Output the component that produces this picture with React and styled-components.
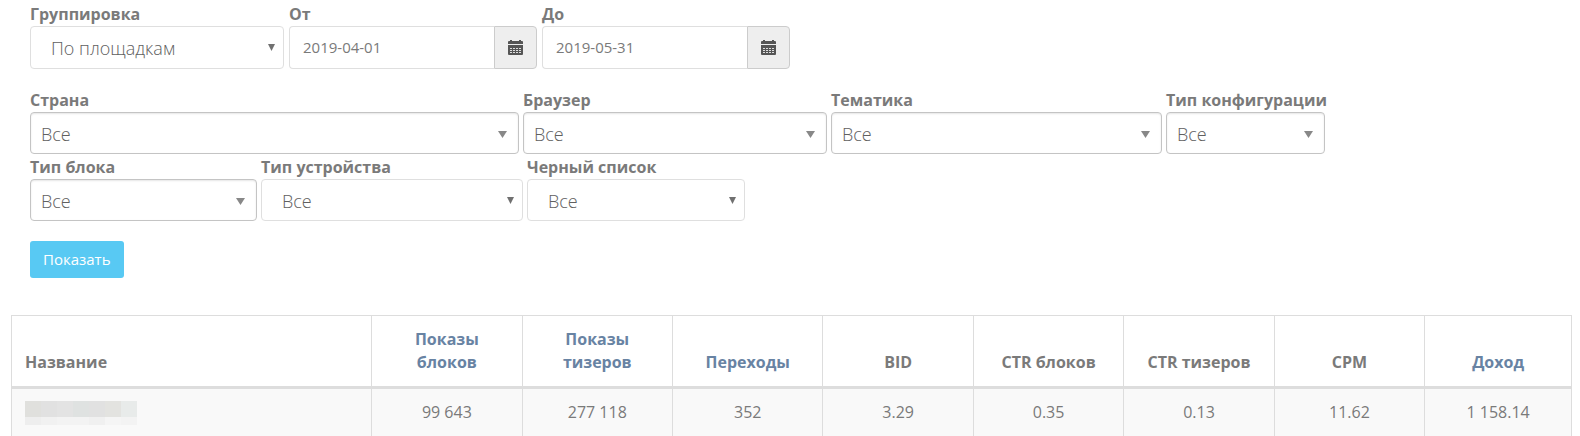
import React, { useState } from 'react';
import styled, { createGlobalStyle } from 'styled-components';

const GlobalStyle = createGlobalStyle`
  * {
    box-sizing: border-box;
  }

  body {
    margin: 0;
    background: #fff;
    color: #7a7a7a;
    font-family: 'Open Sans', 'Noto Sans', sans-serif;
    font-size: 16px;
    line-height: 23px;
  }
`;

const Page = styled.main`
  padding: 3px 8px 0 11px;
`;

const Filters = styled.form`
  padding: 0 19px;
`;

const FilterRow = styled.div`
  display: flex;
  flex-wrap: wrap;
  gap: 2px ${props => props.$wide ? '5px' : '4px'};
  margin-bottom: ${props => props.$last ? '20px' : '2px'};
`;

const Field = styled.div`
  width: ${props => props.$width}px;
`;

const Label = styled.label`
  display: block;
  font-weight: 700;
  white-space: nowrap;
`;

const SelectWrap = styled.div`
  position: relative;
`;

const Select = styled.select`
  appearance: none;
  display: block;
  width: 100%;
  height: ${props => props.$tall ? '43px' : '42px'};
  padding: 0 24px 0 ${props => props.$boxed ? '10px' : '20px'};
  padding-top: ${props => props.$tall ? '0' : '2px'};
  border: 1px solid ${props => props.$boxed ? '#c4c4c4' : '#dfdfdf'};
  border-radius: 4px;
  background: #fff;
  box-shadow: ${props => props.$boxed ? 'inset 0 1px 2px rgba(0, 0, 0, 0.1)' : 'none'};
  color: #606060;
  font-family: inherit;
  font-size: 18px;
  font-weight: 300;
`;

const Arrow = styled.svg`
  position: absolute;
  top: ${props => props.$boxed ? '19px' : '18px'};
  right: ${props => props.$boxed ? '12px' : '9px'};
  width: ${props => props.$boxed ? '9px' : '7px'};
  height: 7px;
  fill: ${props => props.$boxed ? '#888' : '#707070'};
  pointer-events: none;
`;

const DateGroup = styled.div`
  display: flex;
  height: 43px;
`;

const DateInput = styled.input`
  flex: 1;
  min-width: 0;
  padding: 0 13px 2px;
  border: 1px solid #dfdfdf;
  border-right: none;
  border-radius: 4px 0 0 4px;
  color: #7a7a7a;
  font-family: inherit;
  font-size: 15px;
`;

const DateButton = styled.button`
  display: flex;
  align-items: center;
  justify-content: center;
  width: 43px;
  padding: 0;
  border: 1px solid #ccc;
  border-radius: 0 4px 4px 0;
  background: #eee;
  cursor: pointer;
`;

const SubmitButton = styled.button`
  display: block;
  height: 37px;
  padding: 0 13px 2px;
  border: none;
  border-radius: 3px;
  background: #58c9f3;
  color: #fff;
  font-family: inherit;
  font-size: 15px;
  cursor: pointer;

  &:hover {
    background: #39b5e2;
  }
`;

const Table = styled.table`
  width: 100%;
  margin-top: 37px;
  border: 1px solid #ddd;
  border-bottom: none;
  border-spacing: 0;
  table-layout: fixed;
`;

const HeadCell = styled.th`
  width: ${props => props.$width};
  padding: 12px;
  border-right: 1px solid #ddd;
  border-bottom: 3px solid #ddd;
  font-weight: 700;
  text-align: center;
  vertical-align: bottom;

  &:first-child {
    padding-left: 13px;
    text-align: left;
  }

  &:last-child {
    width: auto;
    border-right: none;
  }
`;

const SortLink = styled.a`
  color: #6883a3;
  text-decoration: none;
`;

const Cell = styled.td`
  height: 47px;
  padding: 12px 12px 11px;
  border-right: 1px solid #ddd;
  background: #f9f9f9;
  text-align: center;
  vertical-align: top;

  &:first-child {
    padding-left: 13px;
  }

  &:last-child {
    border-right: none;
  }
`;

const HiddenName = styled.div`
  display: grid;
  grid-template-columns: repeat(7, 16px);
  grid-template-rows: 16px 8px;
`;

const Block = styled.span`
  background: ${props => props.$color};
`;

const groupings = ['По площадкам', 'По дням'];

const mainFilters = [
  { id: 'country', label: 'Страна', width: 489, boxed: true },
  { id: 'browser', label: 'Браузер', width: 304, boxed: true },
  { id: 'topic', label: 'Тематика', width: 331, boxed: true },
  { id: 'config', label: 'Тип конфигурации', width: 159, boxed: true },
];

const extraFilters = [
  { id: 'block', label: 'Тип блока', width: 227, boxed: true },
  { id: 'device', label: 'Тип устройства', width: 262 },
  { id: 'blacklist', label: 'Черный список', width: 218 },
];

const columns = [
  { title: 'Показы блоков', sortable: true },
  { title: 'Показы тизеров', sortable: true },
  { title: 'Переходы', sortable: true },
  { title: 'BID' },
  { title: 'CTR блоков' },
  { title: 'CTR тизеров' },
  { title: 'CPM' },
  { title: 'Доход', sortable: true },
];

const values = ['99 643', '277 118', '352', '3.29', '0.35', '0.13', '11.62', '1 158.14'];

const nameBlocks = [
  '#e0e0dd', '#e1e1e1', '#e3e3e3', '#dfe2e1', '#e1e1e1', '#e3e3e0', '#e8ebea',
  '#eeeeee', '#f1f1f1', '#f3f3f3', '#f3f3f3', '#f0f0f0', '#f5f5f5', '#f3f3f3',
];

const SelectField = ({ id, label, width, boxed, tall, options = ['Все'] }) => (
  <Field $width={width}>
    <Label htmlFor={id}>{label}</Label>
    <SelectWrap>
      <Select id={id} $boxed={boxed} $tall={tall}>
        {options.map(option => (
          <option key={option}>{option}</option>
        ))}
      </Select>
      <Arrow $boxed={boxed} viewBox="0 0 8 8" preserveAspectRatio="none" aria-hidden="true">
        <path d="M0 0h8L4 8z" />
      </Arrow>
    </SelectWrap>
  </Field>
);

const CalendarIcon = () => (
  <svg width="15" height="15" viewBox="0 0 15 15" aria-hidden="true">
    <path d="M2 0h2v1h7V0h2v1h1q1 0 1 1v2H0V2q0-1 1-1h1z" fill="#555" />
    <path d="M0 5h15v9q0 1-1 1H1q-1 0-1-1z" fill="#555" />
    <path
      d="M2 8.5h11M2 10.5h11M2 12.5h11"
      stroke="#ddd"
      strokeWidth="1"
      strokeDasharray="2 1"
    />
  </svg>
);

const DateField = ({ id, label, initial }) => {
  const [value, setValue] = useState(initial);

  return (
    <Field $width={248}>
      <Label htmlFor={id}>{label}</Label>
      <DateGroup>
        <DateInput id={id} type="text" value={value} onChange={e => setValue(e.target.value)} />
        <DateButton type="button" aria-label={label}>
          <CalendarIcon />
        </DateButton>
      </DateGroup>
    </Field>
  );
};

const App = () => (
  <>
    <GlobalStyle />
    <Page>
      <Filters onSubmit={e => e.preventDefault()}>
        <FilterRow $last $wide>
          <SelectField id="group" label="Группировка" width={254} tall options={groupings} />
          <DateField id="from" label="От" initial="2019-04-01" />
          <DateField id="to" label="До" initial="2019-05-31" />
        </FilterRow>
        <FilterRow>
          {mainFilters.map(filter => (
            <SelectField key={filter.id} {...filter} />
          ))}
        </FilterRow>
        <FilterRow $last>
          {extraFilters.map(filter => (
            <SelectField key={filter.id} {...filter} />
          ))}
        </FilterRow>
        <SubmitButton type="submit">Показать</SubmitButton>
      </Filters>

      <Table>
        <thead>
          <tr>
            <HeadCell $width="23.1%">Название</HeadCell>
            {columns.map(column => (
              <HeadCell key={column.title} $width="9.65%">
                {column.sortable ? <SortLink href="#">{column.title}</SortLink> : column.title}
              </HeadCell>
            ))}
          </tr>
        </thead>
        <tbody>
          <tr>
            <Cell>
              <HiddenName>
                {nameBlocks.map((color, index) => (
                  <Block key={index} $color={color} />
                ))}
              </HiddenName>
            </Cell>
            {values.map((value, index) => (
              <Cell key={index}>{value}</Cell>
            ))}
          </tr>
        </tbody>
      </Table>
    </Page>
  </>
);

export default App;
